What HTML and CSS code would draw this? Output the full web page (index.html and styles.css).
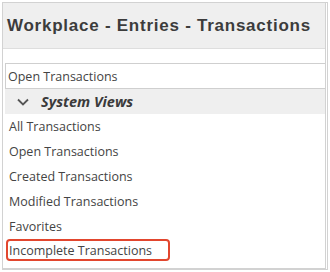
FILE: index.html
```html
<!DOCTYPE html>
<html>
<head>
<meta charset="utf-8">
<link rel="stylesheet" href="styles.css">
</head>
<body>
<div class="frame">
  <div class="header"><span class="title">Workplace - Entries - Transactions</span></div>
  <div class="content">
    <div class="search">Open Transactions</div>
    <div class="group">
      <svg class="chev" width="12" height="8" viewBox="0 0 12 8"><path d="M1 1.5 L6 6.5 L11 1.5" fill="none" stroke="#555" stroke-width="1.8"/></svg>
      <span class="group-label">System Views</span>
    </div>
    <ul class="list">
      <li class="item">All Transactions</li>
      <li class="item">Open Transactions</li>
      <li class="item">Created Transactions</li>
      <li class="item">Modified Transactions</li>
      <li class="item">Favorites</li>
      <li class="item highlight">Incomplete Transactions</li>
    </ul>
  </div>
</div>
</body>
</html>
```

FILE: styles.css
```css
html, body {
  margin: 0;
  padding: 0;
  background: #ffffff;
}
.frame {
  margin: 2px 0 0 2px;
  width: 326px;
  height: 268px;
  box-sizing: border-box;
  border: 1px solid #d2d2d2;
  border-right: 3px double #d2d2d2;
  border-bottom: 2px solid #d2d2d2;
  display: flex;
  flex-direction: column;
}
.header {
  height: 45px;
  flex: none;
  background: #efefef;
  border-bottom: 1px solid #dedede;
  display: flex;
  align-items: center;
  padding-left: 4px;
}
.title {
  font-family: "Liberation Sans", Arial, sans-serif;
  font-weight: bold;
  font-size: 17px;
  letter-spacing: 0.75px;
  color: #3c3c3c;
}
.content {
  flex: 1;
  padding: 14px 0 0 2px;
  font-family: "Open Sans", sans-serif;
  font-size: 12.5px;
  color: #444;
}
.search {
  height: 26px;
  box-sizing: border-box;
  border: 1px solid #cfcfcf;
  border-right: none;
  padding-left: 2px;
  display: flex;
  align-items: center;
}
.group {
  height: 25px;
  background: #efefef;
  display: flex;
  align-items: center;
  padding-left: 12px;
  gap: 12px;
}
.chev {
  flex: none;
}
.group-label {
  font-weight: bold;
  font-style: italic;
  font-size: 14.5px;
  color: #3a3a3a;
}
.list {
  list-style: none;
  margin: 0;
  padding: 0;
}
.item {
  height: 25px;
  display: flex;
  align-items: center;
  padding-left: 4px;
}
.highlight {
  margin-left: 1px;
  width: 164px;
  height: 22px;
  box-sizing: border-box;
  border: 2px solid #e2462e;
  border-radius: 4px;
  padding-left: 1px;
}
```
